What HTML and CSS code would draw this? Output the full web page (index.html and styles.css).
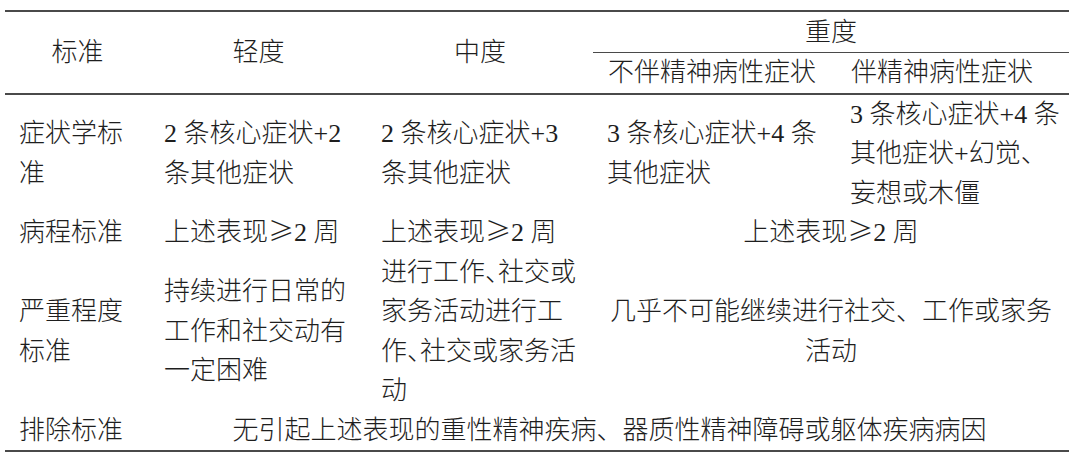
FILE: index.html
```html
<!DOCTYPE html>
<html lang="zh-CN">
<head>
<meta charset="utf-8">
<title>抑郁发作严重程度标准</title>
<link rel="stylesheet" href="styles.css">
</head>
<body>
<table class="grid">
  <colgroup>
    <col class="c0"><col class="c1"><col class="c2"><col class="c3"><col class="c4">
  </colgroup>
  <thead>
    <tr class="h1">
      <th rowspan="2">标准</th>
      <th rowspan="2">轻度</th>
      <th rowspan="2">中度</th>
      <th colspan="2" class="severe">重度</th>
    </tr>
    <tr class="h2">
      <th class="sub first">不伴精神病性症状</th>
      <th class="sub last">伴精神病性症状</th>
    </tr>
  </thead>
  <tbody>
    <tr>
      <td>症状学标准</td>
      <td>2 条核心症状+2 条其他症状</td>
      <td>2 条核心症状+3 条其他症状</td>
      <td>3 条核心症状+4 条其他症状</td>
      <td class="last">3 条核心症状+4 条其他症状+幻觉、妄想或木僵</td>
    </tr>
    <tr>
      <td>病程标准</td>
      <td>上述表现<span class="ge">≥</span>2 周</td>
      <td>上述表现<span class="ge">≥</span>2 周</td>
      <td colspan="2" class="center">上述表现<span class="ge">≥</span>2 周</td>
    </tr>
    <tr>
      <td>严重程度标准</td>
      <td>持续进行日常的工作和社交动有一定困难</td>
      <td class="compact">进行工作、社交或家务活动进行工作、社交或家务活动</td>
      <td colspan="2" class="center">几乎不可能继续进行社交、工作或家务活动</td>
    </tr>
    <tr>
      <td>排除标准</td>
      <td colspan="4" class="center">无引起上述表现的重性精神疾病、器质性精神障碍或躯体疾病病因</td>
    </tr>
  </tbody>
</table>
</body>
</html>
```
FILE: styles.css
```css
html, body {
  margin: 0;
  padding: 0;
  background: #ffffff;
}

.grid {
  margin: 10px 0 0 5px;
  width: 1064px;
  table-layout: fixed;
  border-collapse: collapse;
  font-family: "Liberation Serif", "Noto Sans CJK SC", serif;
  font-size: 26px;
  font-weight: 300;
  line-height: 39.5px;
  color: #1e1e1e;
  border-top: 2px solid #4a4a4a;
  border-bottom: 2px solid #4a4a4a;
}

.c0 { width: 145px; }
.c1 { width: 217px; }
.c2 { width: 226px; }
.c3 { width: 243px; }
.c4 { width: 233px; }

.grid th,
.grid td {
  padding: 0 14px;
  text-align: left;
  vertical-align: middle;
  font-weight: 300;
}

.grid th {
  text-align: center;
}

.grid tr.h1 th {
  padding-top: 1px;
  line-height: 39px;
}

.grid tr.h2 th {
  border-bottom: 2px solid #4a4a4a;
}

.grid thead th[rowspan] {
  border-bottom: 2px solid #4a4a4a;
}

.grid th.severe {
  border-bottom: 1.5px solid #4a4a4a;
}

.grid th.sub.first {
  padding-left: 10px;
  padding-right: 15px;
}

.grid th.sub.last {
  padding-left: 0;
  padding-right: 21px;
}

.grid td.last {
  padding-right: 5px;
}

.grid td.center {
  text-align: center;
}

.grid td.compact {
  font-feature-settings: "halt";
}

.ge {
  font-family: "Noto Sans CJK SC", sans-serif;
  line-height: 1;
}
```
